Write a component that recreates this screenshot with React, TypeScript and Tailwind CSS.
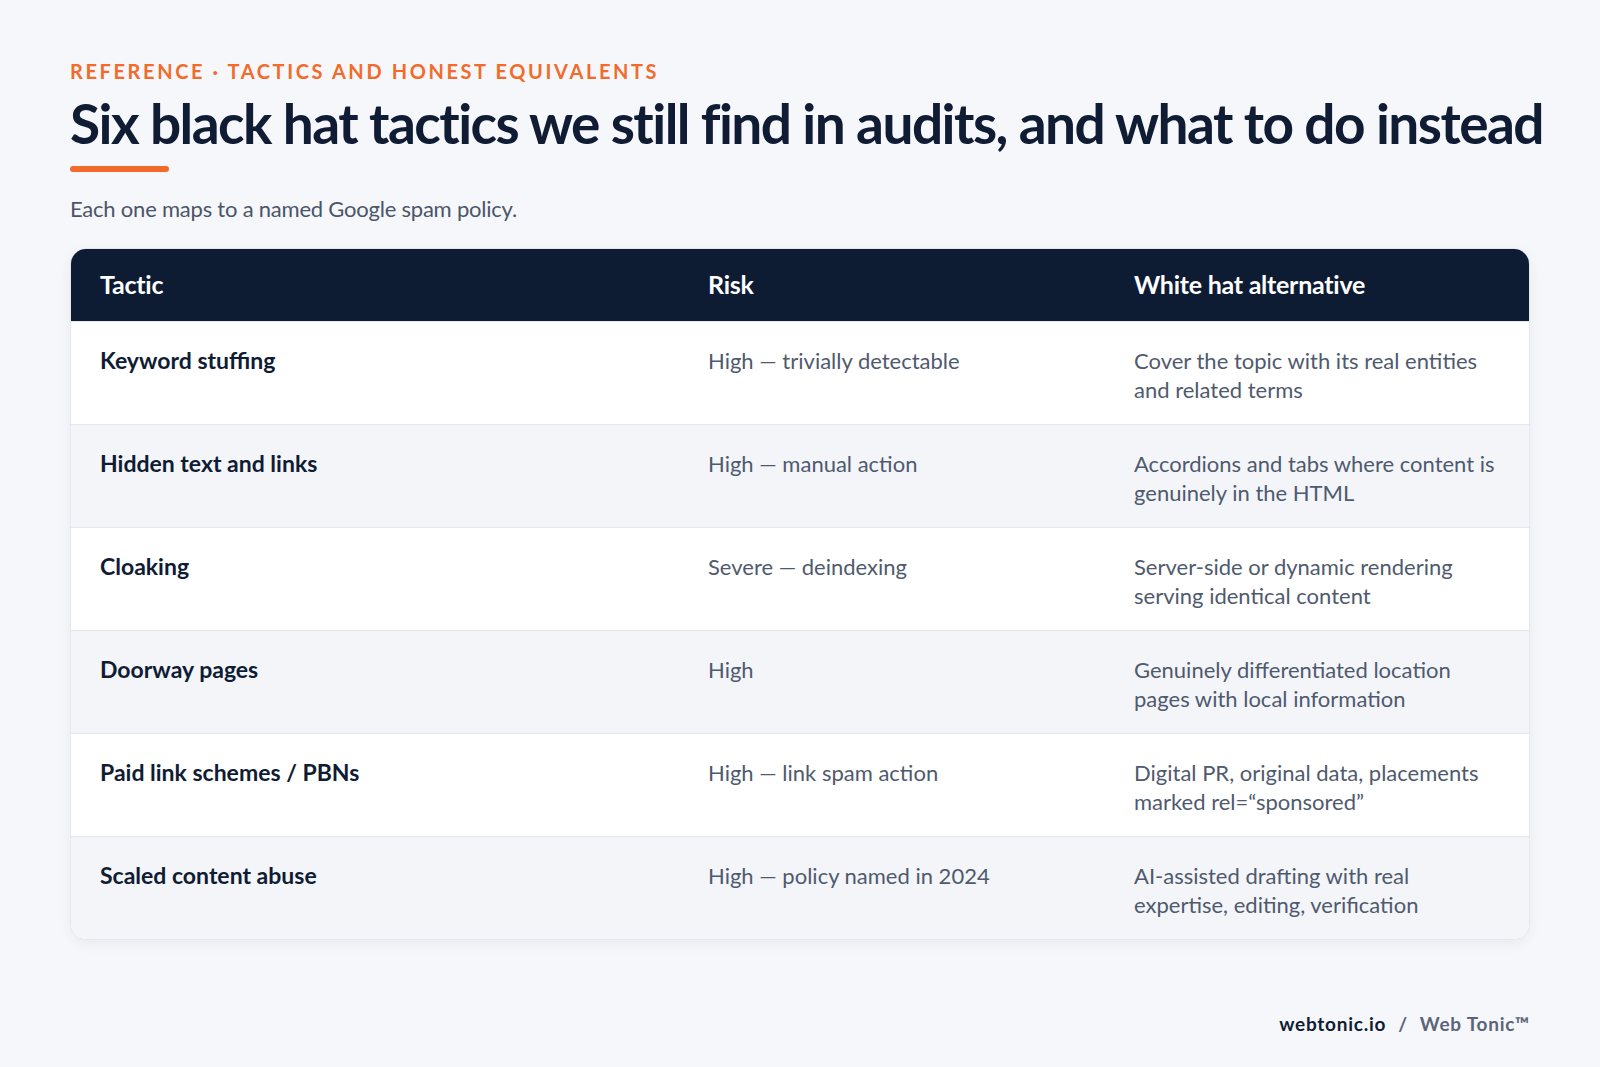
const ROWS = [
  { tactic: 'Keyword stuffing', risk: 'High — trivially detectable', alt: 'Cover the topic with its real entities and related terms' },
  { tactic: 'Hidden text and links', risk: 'High — manual action', alt: 'Accordions and tabs where content is genuinely in the HTML' },
  { tactic: 'Cloaking', risk: 'Severe — deindexing', alt: 'Server-side or dynamic rendering serving identical content' },
  { tactic: 'Doorway pages', risk: 'High', alt: 'Genuinely differentiated location pages with local information' },
  { tactic: 'Paid link schemes / PBNs', risk: 'High — link spam action', alt: 'Digital PR, original data, placements marked rel=“sponsored”' },
  { tactic: 'Scaled content abuse', risk: 'High — policy named in 2024', alt: 'AI-assisted drafting with real expertise, editing, verification' },
];

export default function App() {
  return (
    <div className="min-h-screen bg-[#f5f7fa] px-[70px] pt-[59px] pb-[30px] font-['Lato','Noto_Sans',sans-serif] text-[#0f1c33]">
      <p className="text-[20px] font-bold uppercase leading-[24px] tracking-[0.13em] text-[#f26b2a]">
        Reference · Tactics and honest equivalents
      </p>
      <h1 className="mt-[7px] whitespace-nowrap text-[55px] font-bold leading-[66px] tracking-[-0.028em] text-[#0f1c33]">
        Six black hat tactics we still find in audits, and what to do instead
      </h1>
      <div className="mt-[10px] h-[6px] w-[99px] rounded-full bg-[#f26b2a]" />
      <p className="mt-[23px] text-[22px] leading-[28px] tracking-[-0.01em] text-[#4b5569]">
        Each one maps to a named Google spam policy.
      </p>

      <div className="mt-[25px] overflow-hidden rounded-[16px] border border-[#e4e8ee] bg-white shadow-[0_4px_14px_rgba(15,28,51,0.05)]">
        <div className="grid h-[72px] grid-cols-[608px_426px_1fr] items-center bg-[#0d1b33] text-[25px] font-bold tracking-[-0.01em] text-white">
          <div className="pl-[29px]">Tactic</div>
          <div className="pl-[29px]">Risk</div>
          <div className="pl-[29px]">White hat alternative</div>
        </div>
        {ROWS.map((r, i) => (
          <div
            key={r.tactic}
            className={`grid h-[103px] grid-cols-[608px_426px_1fr] border-t border-[#e4e8ee] pt-[24px] text-[22px] leading-[29px] ${
              i % 2 === 1 ? 'bg-[#f3f5f9]' : 'bg-white'
            }`}
          >
            <div className="pl-[29px] text-[23px] font-bold text-[#0f1c33]">{r.tactic}</div>
            <div className="pl-[29px] text-[#4f5a6e]">{r.risk}</div>
            <div className="pl-[29px] pr-[29px] text-[#4f5a6e]">{r.alt}</div>
          </div>
        ))}
      </div>

      <div className="mt-[72px] flex justify-end gap-[12px] text-[19px] font-bold leading-[24px] tracking-[0.04em]">
        <span className="text-[#0f1c33]">webtonic.io</span>
        <span className="text-[#5b6577]">/</span>
        <span className="text-[#5b6577]">Web Tonic™</span>
      </div>
    </div>
  );
}
